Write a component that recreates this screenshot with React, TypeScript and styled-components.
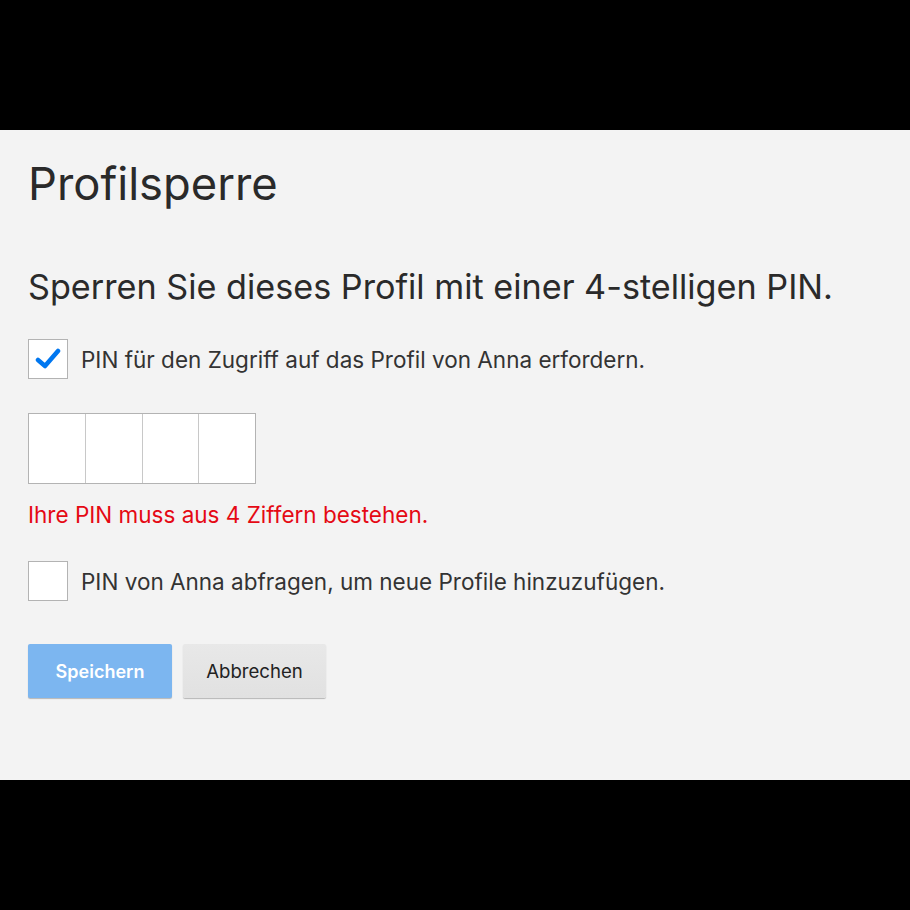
import React from "react";
import styled, { createGlobalStyle } from "styled-components";

const Global = createGlobalStyle`
  html, body { margin: 0; padding: 0; background: #000; }
  body { font-family: Inter, "Noto Sans", sans-serif; }
`;

const Page = styled.div`
  width: 910px;
  height: 910px;
  background: #000;
  display: flex;
  flex-direction: column;
  justify-content: center;
`;

const Panel = styled.div`
  height: 650px;
  box-sizing: border-box;
  background: #f3f3f3;
  padding: 0 28px;
  color: #333;
  display: flex;
  flex-direction: column;
`;

const Title = styled.h1`
  margin: 24px 0 0;
  font-size: 45.3px;
  font-weight: 400;
  line-height: 60px;
  color: #2a2a2a;
`;

const Subtitle = styled.h2`
  margin: 52px 0 0;
  font-size: 34.2px;
  font-weight: 400;
  line-height: 42px;
  color: #2a2a2a;
`;

const Row = styled.label<{ $top: number }>`
  display: flex;
  align-items: center;
  gap: 13px;
  margin-top: ${(p) => p.$top}px;
  font-size: 22.5px;
  color: #333;
`;

const Box = styled.span`
  width: 38px;
  height: 38px;
  background: #fff;
  border: 1px solid #b3b3b3;
  display: flex;
  align-items: center;
  justify-content: center;
  flex-shrink: 0;
`;

const PinGroup = styled.div`
  display: flex;
  margin-top: 34px;
  width: 228px;
  height: 71px;
  border: 1px solid #b3b3b3;
  box-sizing: border-box;
  background: #fff;
`;

const PinCell = styled.div`
  flex: 1;
  & + & { border-left: 1px solid #c8c8c8; }
`;

const ErrorText = styled.div`
  margin-top: 17px;
  font-size: 22.5px;
  color: #e50914;
  line-height: 28px;
`;

const Buttons = styled.div`
  display: flex;
  gap: 11px;
  margin-top: 43px;
`;

const Button = styled.button<{ $primary?: boolean }>`
  height: 54px;
  width: ${(p) => (p.$primary ? 144 : 143)}px;
  border: none;
  border-radius: 2px;
  font-family: Inter, "Noto Sans", sans-serif;
  font-size: ${(p) => (p.$primary ? 18 : 18.6)}px;
  font-weight: ${(p) => (p.$primary ? 600 : 400)};
  color: ${(p) => (p.$primary ? "#fff" : "#222")};
  background: ${(p) => (p.$primary ? "#7cb6f0" : "linear-gradient(#e8e8e8, #e1e1e1)")};
  box-shadow: 0 1px 1px rgba(0, 0, 0, 0.25);
  padding: 0;
`;

export default function App() {
  return (
    <Page>
      <Global />
      <Panel>
        <Title>Profilsperre</Title>
        <Subtitle>Sperren Sie dieses Profil mit einer 4-stelligen PIN.</Subtitle>
        <Row $top={31}>
          <Box>
            <svg width="26" height="22" viewBox="0 0 26 22">
              <path d="M3 12 L10 18 L23 3" fill="none" stroke="#0077f0" strokeWidth="4.5" strokeLinecap="round" strokeLinejoin="round" />
            </svg>
          </Box>
          PIN für den Zugriff auf das Profil von Anna erfordern.
        </Row>
        <PinGroup>
          <PinCell />
          <PinCell />
          <PinCell />
          <PinCell />
        </PinGroup>
        <ErrorText>Ihre PIN muss aus 4 Ziffern bestehen.</ErrorText>
        <Row $top={32}>
          <Box />
          PIN von Anna abfragen, um neue Profile hinzuzufügen.
        </Row>
        <Buttons>
          <Button $primary>Speichern</Button>
          <Button>Abbrechen</Button>
        </Buttons>
      </Panel>
    </Page>
  );
}
